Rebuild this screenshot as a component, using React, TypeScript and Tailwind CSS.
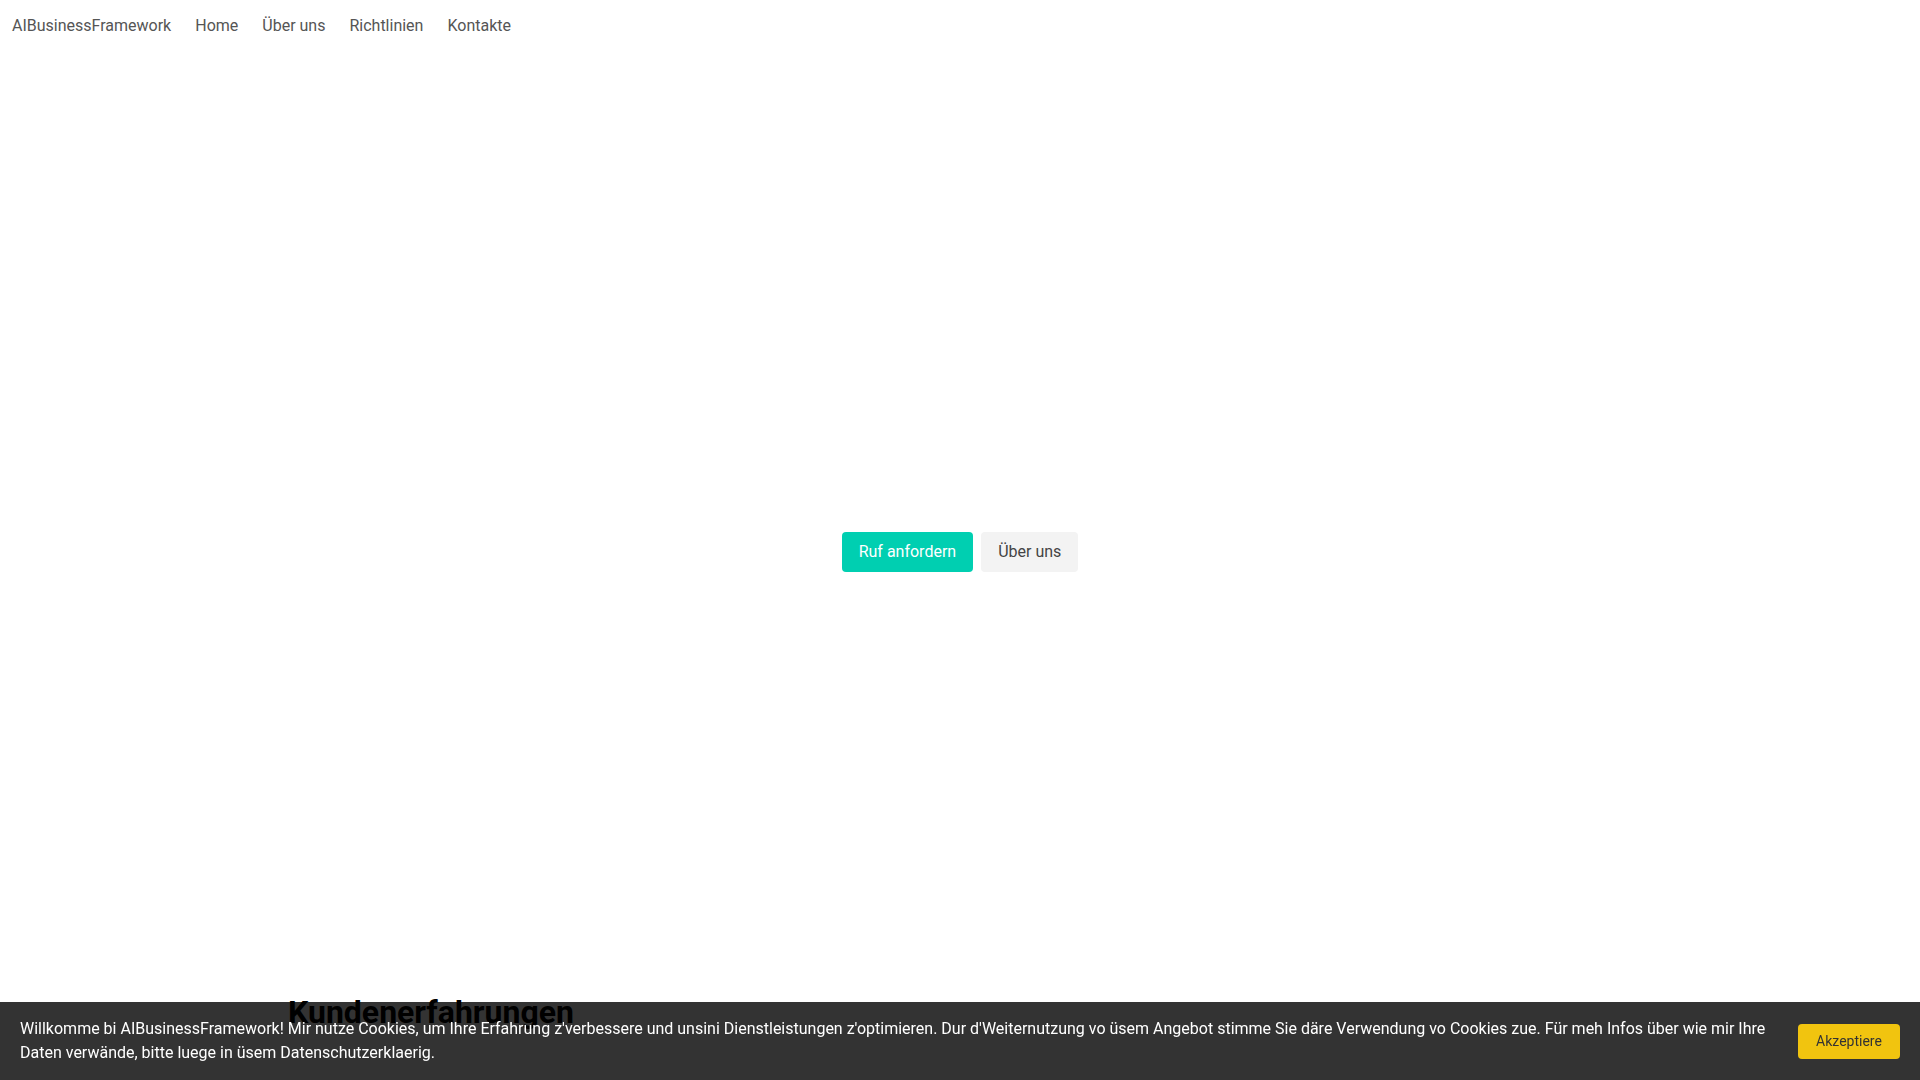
import React from "react";

const navLinks = ["Home", "Über uns", "Richtlinien", "Kontakte"];

export default function App() {
  return (
    <div className="min-h-[1400px] bg-white font-['Roboto',_'Liberation_Sans',_sans-serif] text-[#333]">
      <nav className="flex h-[52px] items-center gap-[24px] px-[12px] text-[16px] text-[#555]">
        <a href="#" className="text-[#555]">
          AIBusinessFramework
        </a>
        {navLinks.map((link) => (
          <a key={link} href="#" className="text-[#555]">
            {link}
          </a>
        ))}
      </nav>

      {/* hero: background image did not load, so only the buttons show */}
      <section className="flex flex-col items-center pt-[480px] pb-[421px]">
        <div className="flex gap-[8px]">
          <button className="h-[40px] rounded-[4px] bg-[#00cfb1] px-[17px] text-[16px] text-white">
            Ruf anfordern
          </button>
          <button className="h-[40px] rounded-[4px] bg-[#f3f3f3] px-[17px] text-[16px] text-[#444]">
            Über uns
          </button>
        </div>
      </section>

      <section className="mx-auto w-[1344px]">
        <h2 className="text-[32px] leading-[1.2] font-bold text-black">Kundenerfahrungen</h2>
      </section>

      <div className="fixed inset-x-0 bottom-0 flex h-[78px] items-center gap-[24px] bg-black/80 px-[20px]">
        <p className="flex-1 text-[16px] leading-[24px] text-white">
          Willkomme bi AIBusinessFramework! Mir nutze Cookies, um Ihre Erfahrung z'verbessere und unsini
          Dienstleistungen z'optimieren. Dur d'Weiternutzung vo üsem Angebot stimme Sie däre Verwendung vo
          Cookies zue. Für meh Infos über wie mir Ihre Daten verwände, bitte luege in üsem Datenschutzerklaerig.
        </p>
        <button className="h-[35px] w-[102px] shrink-0 rounded-[4px] bg-[#f1c40f] text-[14px] text-[#333]">
          Akzeptiere
        </button>
      </div>
    </div>
  );
}
